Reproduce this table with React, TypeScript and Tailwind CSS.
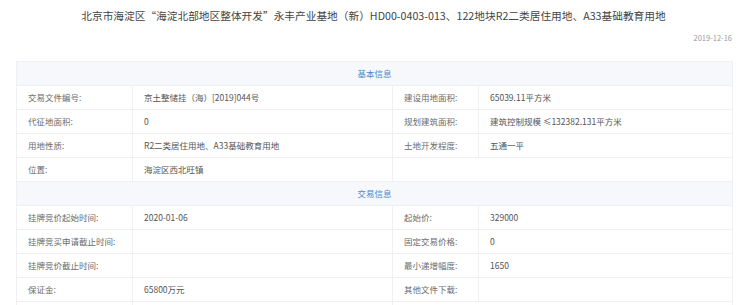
const FONT = '"Microsoft YaHei", "Noto Sans CJK SC", "Noto Sans", sans-serif';

type Row = [string, string, string?, string?];

const BASIC: Row[] = [
  ["交易文件编号:", "京土整储挂（海）[2019]044号", "建设用地面积:", "65039.11平方米"],
  ["代征地面积:", "0", "规划建筑面积:", "建筑控制规模 ≤132382.131平方米"],
  ["用地性质:", "R2二类居住用地、A33基础教育用地", "土地开发程度:", "五通一平"],
  ["位置:", "海淀区西北旺镇"],
];

const TRADE: Row[] = [
  ["挂牌竞价起始时间:", "2020-01-06", "起始价:", "329000"],
  ["挂牌竞买申请截止时间:", "", "固定交易价格:", "0"],
  ["挂牌竞价截止时间:", "", "最小递增幅度:", "1650"],
  ["保证金:", "65800万元", "其他文件下载:", ""],
];

const cell = "h-[24px] border border-[#eef0f4] px-[11px] text-[8.5px] leading-none";

const Section = ({ title, rows }: { title: string; rows: Row[] }) => (
  <>
    <tr>
      <td colSpan={4} className={`${cell} bg-[#f6f8fc] text-center text-[#4a88cc]`}>
        {title}
      </td>
    </tr>
    {rows.map((r, i) => (
      <tr key={i}>
        <td className={`${cell} text-[#6b6b6b]`}>{r[0]}</td>
        <td className={`${cell} text-[#555]`}>{r[1]}</td>
        {r[2] === undefined ? (
          <td colSpan={2} className={cell}></td>
        ) : (
          <>
            <td className={`${cell} text-[#6b6b6b]`}>{r[2]}</td>
            <td className={`${cell} text-[#555]`}>{r[3]}</td>
          </>
        )}
      </tr>
    ))}
  </>
);

const App = () => {
  return (
    <div className="w-[740px] h-[305px] overflow-hidden bg-white" style={{ fontFamily: FONT }}>
      <h1 className="h-[32px] pt-[10px] pl-[7px] text-center text-[10.7px] leading-[12px] font-normal text-[#444]">
        北京市海淀区“海淀北部地区整体开发”永丰产业基地（新）HD00-0403-013、122地块R2二类居住用地、A33基础教育用地
      </h1>
      <div className="h-[29px] pr-[8px] text-right text-[7.5px] leading-[9px] pt-[1px] text-[#999]">2019-12-16</div>
      <table className="ml-[16px] w-[716px] table-fixed border-collapse">
        <colgroup>
          <col className="w-[116px]" />
          <col className="w-[260px]" />
          <col className="w-[86px]" />
          <col className="w-[254px]" />
        </colgroup>
        <tbody>
          <Section title="基本信息" rows={BASIC} />
          <Section title="交易信息" rows={TRADE} />
          <tr>
            <td className={cell}></td>
            <td className={cell}></td>
            <td colSpan={2} className={cell}></td>
          </tr>
        </tbody>
      </table>
    </div>
  );
};

export default App;
